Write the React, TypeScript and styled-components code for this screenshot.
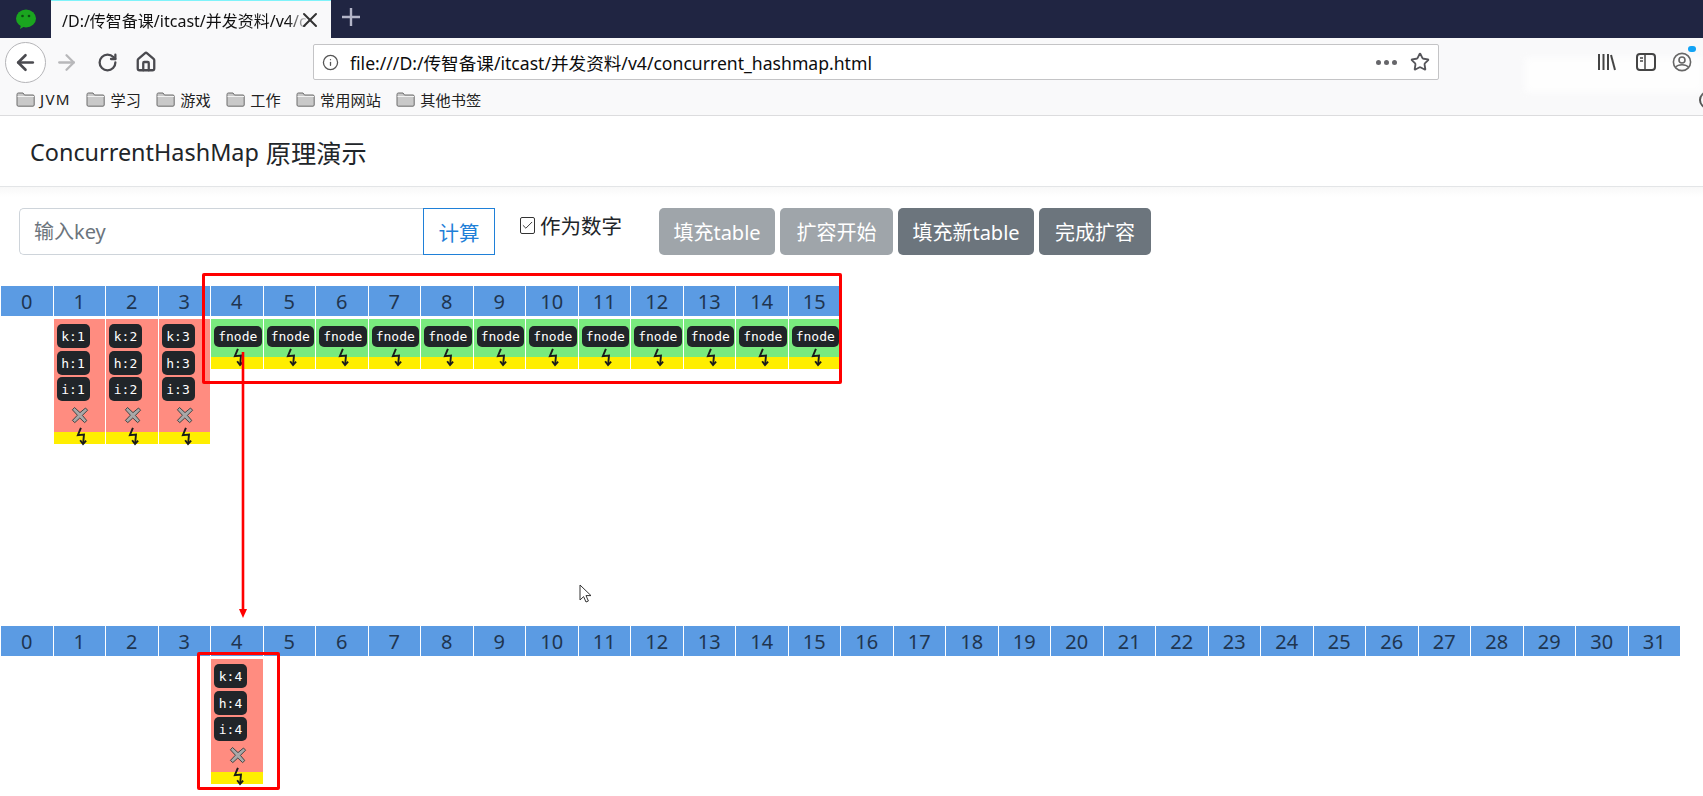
import React from "react";
import styled, { createGlobalStyle } from "styled-components";
import { ArrowLeft, ArrowRight, Check, House, Info, RotateCw, Star, X } from "lucide-react";

const Global = createGlobalStyle`
  html, body { margin: 0; padding: 0; background: #fff; }
  body { font-family: "Noto Sans", "Noto Sans CJK SC", sans-serif; color: #212529; overflow: hidden; }
  #root { position: relative; width: 1703px; height: 796px; overflow: hidden; }
`;

const TabStrip = styled.div`
  display: flex; align-items: stretch; height: 38px; background: #202542;
`;
const AppSlot = styled.div`
  width: 51px; display: flex; align-items: center; justify-content: center;
`;
const ActiveTab = styled.div`
  width: 280px; box-sizing: border-box; background: #f9f9fa; border-top: 1px solid #7ff3fa;
  display: flex; align-items: center; justify-content: space-between; padding: 0 9px 0 11px; font-size: 16px; color: #111;
  svg { flex: none; margin-left: -10px; }
`;
const TabTitle = styled.span`
  white-space: nowrap;
  -webkit-mask-image: linear-gradient(90deg, #000 92%, rgba(0,0,0,.15) 100%);
  mask-image: linear-gradient(90deg, #000 92%, rgba(0,0,0,.15) 100%);
`;
const NewTab = styled.div`
  width: 40px; padding-bottom: 4px; display: flex; align-items: center; justify-content: center; color: #b3b5c8;
`;

const ToolBar = styled.div`
  height: 45px; box-sizing: border-box; padding: 3px 0 0 5px; background: #f9f9fa; display: flex; align-items: center; position: relative;
`;
const BackButton = styled.div`
  width: 41px; height: 41px; box-sizing: border-box; border-radius: 50%; border: 1px solid #b5b5b8; background: #fff;
  display: flex; align-items: center; justify-content: center; color: #4a4a4f;
`;
const NavIcon = styled.div<{ $w: number; $c?: string }>`
  width: ${(p) => p.$w}px; display: flex; align-items: center; justify-content: center; color: ${(p) => p.$c || "#4a4a4f"};
`;
const UrlBar = styled.div`
  margin-left: 149px; width: 1126px; height: 36px; box-sizing: border-box; background: #fff; border: 1px solid #c4c4c6; border-radius: 2px;
  display: flex; align-items: center; padding: 0 8px; font-size: 17.6px; color: #0c0c0d;
`;
const UrlText = styled.span` margin-left: 11px; flex: 1; white-space: nowrap; `;
const Dots = styled.div`
  display: flex; gap: 3px; margin-right: 13px;
  i { width: 5px; height: 5px; border-radius: 50%; background: #66666a; display: block; }
`;
const RightTools = styled.div`
  display: flex; align-items: center; gap: 20px; margin-left: auto; margin-right: 11px; color: #444; position: relative; z-index: 2;
`;
const Smudge = styled.div`
  position: absolute; left: 1525px; top: 20px; width: 178px; height: 34px; background: #fff; filter: blur(3px); opacity: .85; z-index: 1;
`;
const Account = styled.div`
  position: relative; width: 20px; height: 20px; margin-left: -4px;
  &::after { content: ""; position: absolute; top: -6px; right: -4px; width: 8px; height: 6px; border-radius: 4px; background: #12a3f5; }
`;

const Bookmarks = styled.div`
  height: 33px; box-sizing: border-box; background: #f9f9fa; border-bottom: 1px solid #dcdcde; display: flex; align-items: center;
  padding-left: 16px; gap: 15.5px; position: relative;
`;
const Mark = styled.div<{ $wide?: boolean }>`
  display: flex; align-items: center; gap: 5px; font-size: 15.2px; color: #222; letter-spacing: ${(p) => (p.$wide ? 1.3 : 0)}px;
`;
const CutIcon = styled.div`
  position: absolute; right: -14px; top: 8px; width: 14px; height: 14px; border: 2px solid #555; border-radius: 50%;
`;

const Header = styled.header`
  height: 71px; box-sizing: border-box; border-bottom: 1px solid #e3e5e7; padding: 2px 0 0 30px; display: flex; align-items: center; gap: 7px;
  font-size: 23.4px; color: #212529; background: #fff;
`;
const BrandCjk = styled.span` font-size: 25.2px; `;
const Controls = styled.div`
  display: flex; align-items: flex-start; padding: 21px 0 0 19px; height: 99px; box-sizing: border-box;
  background: linear-gradient(#f8f8f8, #fff 10px);
`;
const KeyInput = styled.input`
  width: 404px; height: 47px; box-sizing: border-box; border: 1px solid #ced4da; border-right: none; border-radius: 5px 0 0 5px; padding: 0 14px;
  font: inherit; font-size: 20px; background: #fff; outline: none;
  &::placeholder { color: #6c757d; opacity: 1; }
`;
const CalcButton = styled.div`
  width: 72px; height: 47px; box-sizing: border-box; border: 1px solid #1f80d8; color: #1f80d8; font-size: 20.5px;
  display: flex; align-items: center; justify-content: center; background: #fff;
`;
const CheckLabel = styled.div`
  display: flex; align-items: center; gap: 5px; margin-left: 25px; margin-top: 1px; font-size: 20.5px; color: #212529; height: 32px; width: 101px; white-space: nowrap;
`;
const CheckBox = styled.span`
  width: 17px; height: 17px; box-sizing: border-box; border: 1px solid #333; border-radius: 2px; background: #fff;
  display: flex; align-items: center; justify-content: center; color: #333;
`;
const Buttons = styled.div` display: flex; gap: 5px; margin-left: 38px; `;
const ActionButton = styled.div<{ $off?: boolean; $w: number }>`
  width: ${(p) => p.$w}px; height: 47px; border-radius: 5px; color: #fff; font-size: 20px;
  background: ${(p) => (p.$off ? "#9fa5aa" : "#6c757d")};
  display: flex; align-items: center; justify-content: center;
`;

const Grid = styled.div<{ $n: number }>`
  display: grid; grid-template-columns: repeat(${(p) => p.$n}, 51.5px); column-gap: 1px; padding-left: 1px;
`;
const Cell = styled.div`
  height: 30px; background: #5b9be3; color: #1f3550; font-size: 20px; display: flex; align-items: center; justify-content: center;
`;
const NodeRow = styled(Grid)` margin-top: 3px; align-items: start; `;
const SecondTable = styled.section` margin-top: 182px; `;
const NodeCol = styled.div<{ $green?: boolean; $col?: number }>`
  background: ${(p) => (p.$green ? "#79ea7e" : "#ff8c80")};
  grid-column: ${(p) => p.$col || "auto"};
  padding-top: ${(p) => (p.$green ? 7 : 5)}px;
  display: flex; flex-direction: column; align-items: flex-start;
`;
const Badge = styled.div<{ $gap?: number }>`
  margin: ${(p) => p.$gap || 0}px 0 0 3px; height: 24px; width: 33px; border-radius: 5px; background: #212529; color: #fff;
  font: 13px "DejaVu Sans Mono", monospace; display: flex; align-items: center; justify-content: center;
`;
const FBadge = styled(Badge)`
  height: 21px; width: 47.5px; margin-left: 3px;
`;
const Cross = styled.div`
  align-self: center; height: 18px; margin: 5px 0 8px 2px; display: flex;
`;
const Band = styled.div<{ $top: number; $mt: number }>`
  align-self: stretch; height: 12px; background: #ffee00; position: relative; margin-top: ${(p) => p.$mt}px;
  svg { position: absolute; left: 22px; top: ${(p) => p.$top}px; }
`;

const RedBox = styled.div<{ $x: number; $y: number; $w: number; $h: number }>`
  position: absolute; left: ${(p) => p.$x}px; top: ${(p) => p.$y}px; width: ${(p) => p.$w}px; height: ${(p) => p.$h}px;
  box-sizing: border-box; border: 3px solid #ff0000; border-radius: 2px;
`;
const Overlay = styled.svg<{ $x: number; $y: number }>`
  position: absolute; left: ${(p) => p.$x}px; top: ${(p) => p.$y}px;
`;

const Folder = () => (
  <svg width="19" height="18" viewBox="0 0 19 18">
    <path d="M1 4.5C1 3.5 1.6 3 2.4 3H7l1.5 2H17c.7 0 1.2.5 1.2 1.2V15c0 .7-.5 1.2-1.2 1.2H2.2C1.5 16.2 1 15.7 1 15Z" fill="#c9c9c9" stroke="#6c6c6c" />
    <path d="M1.5 6.5H18" stroke="#f2f2f2" />
  </svg>
);
const Bolt = () => (
  <svg width="13" height="19" viewBox="0 0 12 18" fill="none" stroke="#1a1a1a" strokeWidth="1.8" strokeLinejoin="miter">
    <path d="M4.5 .8 1.6 7.8 7.4 7.2 6.6 15.6" />
    <path d="M3.8 12.6 6.5 16.2 9.4 12.8" />
  </svg>
);
const CrossIcon = () => (
  <svg width="18" height="18" viewBox="0 0 18 18">
    <path d="M3.5 1.5 9 6.6 14.5 2 16.6 4.2 11.4 9.4 15.8 14.6 13.6 16.6 8.8 12 3.8 16.6 1.4 14.4 6.4 9.2 1.4 3.8Z" fill="#a8a8a8" stroke="#444" strokeWidth="1" strokeLinejoin="round" />
  </svg>
);

const RedNode = ({ n, col }: { n: number; col?: number }) => (
  <NodeCol $col={col}>
    <Badge>k:{n}</Badge>
    <Badge $gap={3}>h:{n}</Badge>
    <Badge $gap={2}>i:{n}</Badge>
    <Cross><CrossIcon /></Cross>
    <Band $top={-5} $mt={0}><Bolt /></Band>
  </NodeCol>
);
const GreenNode = () => (
  <NodeCol $green>
    <FBadge>fnode</FBadge>
    <Band $top={-9} $mt={10}><Bolt /></Band>
  </NodeCol>
);

const range = (n: number) => Array.from({ length: n }, (_, i) => i);

export default function App() {
  return (
    <>
      <Global />
      <TabStrip>
        <AppSlot>
          <svg width="22" height="20" viewBox="0 0 22 20">
            <ellipse cx="11" cy="9.5" rx="10" ry="9" fill="#1aa51f" />
            <path d="M6 16 5 20 10 17Z" fill="#1aa51f" />
            <circle cx="7.5" cy="7" r="1.3" fill="#0c4d12" />
            <circle cx="14" cy="7" r="1.3" fill="#0c4d12" />
          </svg>
        </AppSlot>
        <ActiveTab>
          <TabTitle>/D:/传智备课/itcast/并发资料/v4/c</TabTitle>
          <X size={24} strokeWidth={2} color="#333" />
        </ActiveTab>
        <NewTab>
          <svg width="18" height="18" viewBox="0 0 18 18"><path d="M9 0v18M0 9h18" stroke="currentColor" strokeWidth="2.4" /></svg>
        </NewTab>
      </TabStrip>
      <ToolBar>
        <BackButton><ArrowLeft size={25} strokeWidth={2.5} /></BackButton>
        <NavIcon $w={40} $c="#b8b8ba"><ArrowRight size={25} strokeWidth={2.2} /></NavIcon>
        <NavIcon $w={42}><RotateCw size={21} strokeWidth={2.6} /></NavIcon>
        <NavIcon $w={36}><House size={22} strokeWidth={2.5} /></NavIcon>
        <UrlBar>
          <Info size={17} strokeWidth={1.8} color="#555" />
          <UrlText>file:///D:/传智备课/itcast/并发资料/v4/concurrent_hashmap.html</UrlText>
          <Dots><i /><i /><i /></Dots>
          <Star size={20} strokeWidth={2.2} color="#55555a" />
        </UrlBar>
        <Smudge />
        <RightTools>
          <svg width="20" height="20" viewBox="0 0 20 20" fill="none" stroke="#444" strokeWidth="2"><path d="M3 2v16M7.5 2v16M12 2v16" /><path d="M15 3l4 15" /></svg>
          <svg width="20" height="18" viewBox="0 0 20 18" fill="none" stroke="#444" strokeWidth="2"><rect x="1" y="1" width="18" height="16" rx="3" /><path d="M9 1v16M4 5h3M4 8h3" strokeWidth="1.5" /></svg>
          <Account>
            <svg width="20" height="20" viewBox="0 0 20 20" fill="none" stroke="#666" strokeWidth="1.6"><circle cx="10" cy="10" r="8.6" /><circle cx="10" cy="8" r="3" /><path d="M4 15c2-3 10-3 12 0" /></svg>
          </Account>
        </RightTools>
      </ToolBar>
      <Bookmarks>
        {["JVM", "学习", "游戏", "工作", "常用网站", "其他书签"].map((b) => (
          <Mark key={b} $wide={b === "JVM"}><Folder />{b}</Mark>
        ))}
        <CutIcon />
      </Bookmarks>
      <Header>ConcurrentHashMap<BrandCjk>原理演示</BrandCjk></Header>
      <Controls>
        <KeyInput placeholder="输入key" readOnly />
        <CalcButton>计算</CalcButton>
        <CheckLabel><CheckBox><Check size={13} strokeWidth={1.8} /></CheckBox>作为数字</CheckLabel>
        <Buttons>
          <ActionButton $off $w={116}>填充table</ActionButton>
          <ActionButton $off $w={113}>扩容开始</ActionButton>
          <ActionButton $w={136}>填充新table</ActionButton>
          <ActionButton $w={112}>完成扩容</ActionButton>
        </Buttons>
      </Controls>
      <section>
        <Grid $n={16}>{range(16).map((i) => <Cell key={i}>{i}</Cell>)}</Grid>
        <NodeRow $n={16}>
          <div />
          <RedNode n={1} />
          <RedNode n={2} />
          <RedNode n={3} />
          {range(12).map((i) => <GreenNode key={i} />)}
        </NodeRow>
      </section>
      <SecondTable>
        <Grid $n={32}>{range(32).map((i) => <Cell key={i}>{i}</Cell>)}</Grid>
        <NodeRow $n={32}>
          <RedNode n={4} col={5} />
        </NodeRow>
      </SecondTable>
      <RedBox $x={202} $y={273} $w={640} $h={111} />
      <RedBox $x={197} $y={652} $w={83} $h={138} />
      <Overlay $x={236} $y={352} width="14" height="268" viewBox="0 0 14 268">
        <path d="M7 0V258" stroke="#ff0000" strokeWidth="2.6" />
        <path d="M3 257H11L7 266Z" fill="#ff0000" />
      </Overlay>
      <Overlay $x={579} $y={584} width="14" height="20" viewBox="0 0 14 20">
        <path d="M1 1V16L4.6 12.6 7 18 9.4 17 7 11.6H12Z" fill="#fff" stroke="#333" strokeWidth="1" />
      </Overlay>
    </>
  );
}
